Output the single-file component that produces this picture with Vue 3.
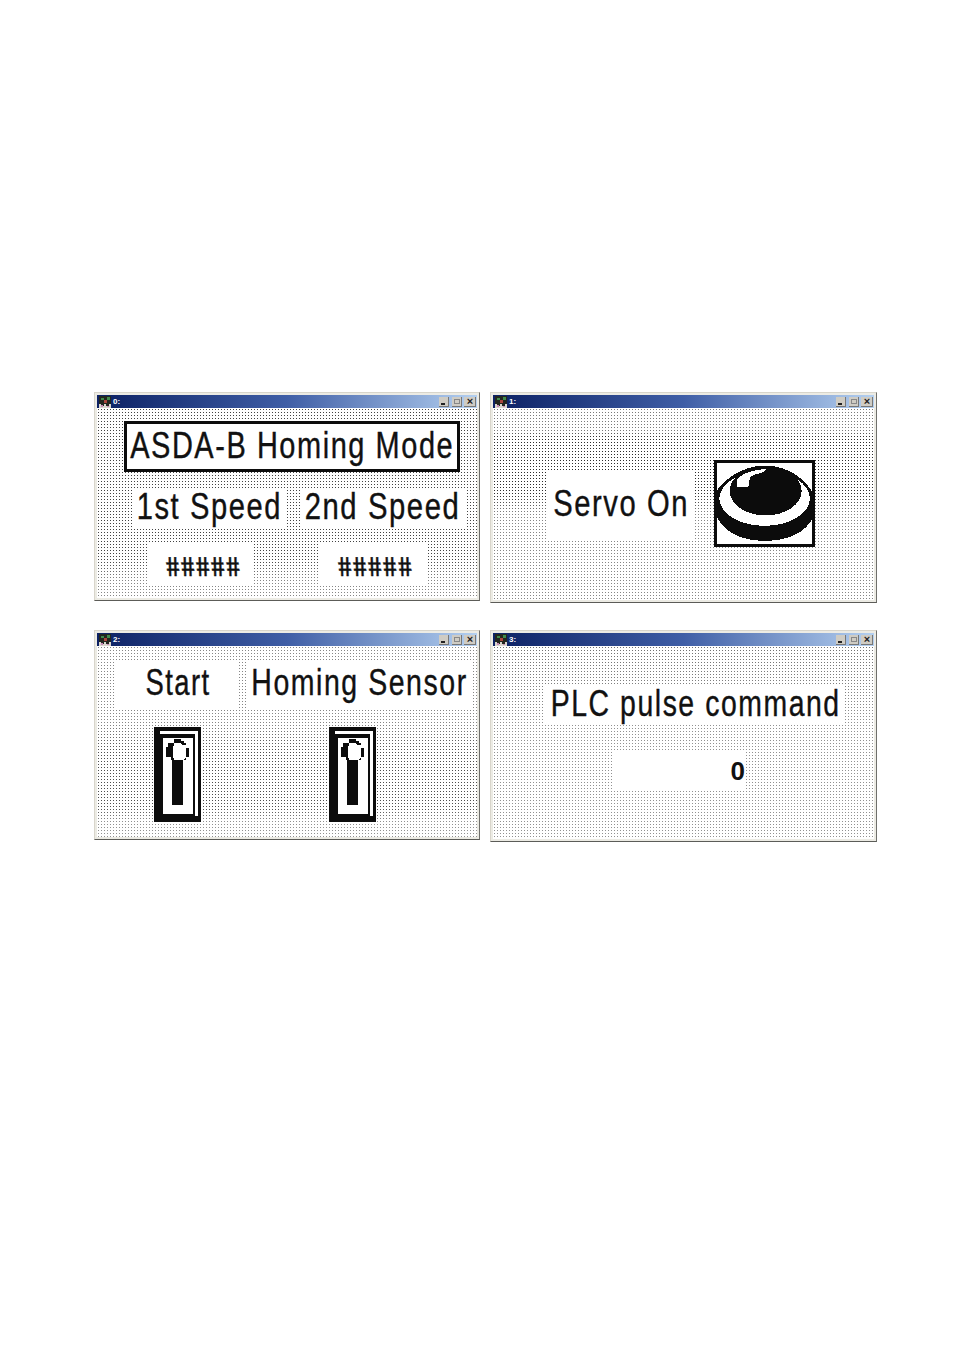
<script setup>
// each HMI screen: widgets sit on a free canvas, coordinates are canvas px
const screens = [
  {
    id: 0,
    height: 209,
    tone: "tone-a",
    items: [
      { text: "ASDA-B Homing Mode", x: 27, y: 13, w: 336, h: 51, fit: 0.782, framed: true },
      { text: "1st Speed", x: 36, y: 80, w: 152, h: 39, fit: 0.786 },
      { text: "2nd Speed", x: 203, y: 80, w: 165, h: 39, fit: 0.79 },
      { text: "#####", x: 50, y: 135, w: 107, h: 43, hash: true },
      { text: "#####", x: 221, y: 135, w: 109, h: 43, hash: true },
    ],
  },
  {
    id: 1,
    height: 211,
    tone: "tone-b",
    button: true,
    items: [{ text: "Servo On", x: 54, y: 62, w: 148, h: 70, fit: 0.788 }],
  },
  {
    id: 2,
    height: 210,
    tone: "tone-d",
    toggles: [57, 232],
    items: [
      { text: "Start", x: 19, y: 14, w: 121, h: 48, fit: 0.74, shift: 2 },
      { text: "Homing Sensor", x: 149, y: 14, w: 226, h: 48, fit: 0.77 },
    ],
  },
  {
    id: 3,
    height: 212,
    tone: "tone-c",
    items: [
      { text: "PLC pulse command", x: 52, y: 38, w: 300, h: 41, fit: 0.768, shift: 1 },
      { text: "0", x: 119, y: 104, w: 133, h: 41, zero: true },
    ],
  },
]

function place(item) {
  return {
    left: item.x + "px",
    top: item.y + "px",
    width: item.w + "px",
    height: item.h + "px",
  }
}

// the HMI font is narrower than Arial, squeeze it to the measured width
function squeeze(item) {
  if (!item.fit) return undefined
  return { transform: `translateX(${item.shift || 0}px) scaleX(${item.fit})` }
}
</script>

<template>
  <main class="page">
    <section
      v-for="s in screens"
      :key="s.id"
      class="window"
      :style="{ height: s.height + 'px' }"
    >
      <header class="titlebar">
        <svg class="app-icon" viewBox="0 0 12 12" shape-rendering="crispEdges">
          <rect width="12" height="12" fill="#d9d6ce" />
          <path d="M0 0h12v8h-2v2H7V8H5v2H2V8H0z" fill="#23261f" />
          <path d="M2 2h3v2H2zM8 1h3v3H8z" fill="#3f8a4b" />
          <path d="M5 4h3v3H5z" fill="#a8443c" />
          <path d="M2 9h2v2H2zM8 10h2v1H8z" fill="#c98ab8" />
        </svg>
        <span class="caption">{{ s.id }}:</span>
        <div class="controls">
          <span class="ctl"><i class="min"></i></span>
          <span class="ctl"><i class="max"></i></span>
          <span class="ctl close">×</span>
        </div>
      </header>

      <div class="canvas" :class="s.tone">
        <div
          v-for="item in s.items"
          :key="item.text + item.x"
          class="label"
          :class="{ framed: item.framed, hash: item.hash, zero: item.zero, squeezed: item.fit }"
          :style="place(item)"
        >
          <span :style="squeeze(item)">{{ item.text }}</span>
        </div>

        <!-- push button -->
        <svg
          v-if="s.button"
          class="push"
          viewBox="42 30 303 260"
          shape-rendering="crispEdges"
        >
          <rect x="42" y="30" width="303" height="260" fill="#fff" />
          <path
            d="M45 130C70 90 120 48 195 46C270 48 320 90 342 135V195C320 250 260 272 195 272C130 272 70 250 45 190Z"
            fill="#0c0c0c"
          />
          <ellipse cx="194" cy="145" rx="136" ry="82" fill="#fff" />
          <ellipse cx="197" cy="122" rx="108" ry="74" fill="#0c0c0c" />
          <path d="M112 110V88Q125 72 150 65Q175 56 200 57L186 68Q160 72 150 82L145 110Z" fill="#fff" />
          <rect x="46.5" y="34.5" width="294" height="251" fill="none" stroke="#0c0c0c" stroke-width="9" />
        </svg>

        <!-- toggle switches -->
        <svg
          v-for="x in s.toggles"
          :key="x"
          class="toggle"
          :style="{ left: x + 'px' }"
          viewBox="42 20 142 285"
          shape-rendering="crispEdges"
        >
          <rect x="42" y="20" width="142" height="285" fill="#0c0c0c" />
          <rect x="60" y="30" width="115" height="10" fill="#fff" />
          <rect x="165" y="30" width="10" height="258" fill="#fff" />
          <rect x="69" y="52" width="91" height="231" fill="#fff" />
          <rect x="95" y="125" width="35" height="130" fill="#0c0c0c" />
          <path d="M102 56h22v6h8v6h8v15h9v27h-9v10h-10v8H95v-8H84v-10H77V78h8V68h17z" fill="#0c0c0c" />
          <path d="M105 66h17l6 6h8l4 8v30l-6 5-4 5h-25l-5-8V78z" fill="#fff" />
          <rect x="84" y="110" width="10" height="10" fill="#fff" />
        </svg>
      </div>
    </section>
  </main>
</template>

<style scoped>
.page {
  display: grid;
  grid-template-columns: 386px 387px;
  column-gap: 10px;
  row-gap: 27px;
  align-content: start;
  align-items: start;
  box-sizing: border-box;
  height: 1350px;
  padding: 392px 0 0 94px;
  background: #fff;
}

.window {
  display: flex;
  flex-direction: column;
  box-sizing: border-box;
  padding: 2px;
  border: 1px solid;
  border-color: #d8d5cb #6f6f6b #5c5c58 #d8d5cb;
  background: #ecebe4;
}

.titlebar {
  display: flex;
  align-items: center;
  flex: none;
  height: 13px;
  padding: 0 1px 0 2px;
  background: linear-gradient(90deg, #0c2164 0%, #3f5ea6 50%, #b4d0f0 100%);
}

.app-icon {
  width: 12px;
  height: 12px;
}

.caption {
  margin-left: 2px;
  font: bold 8px "Liberation Sans", sans-serif;
  color: #fff;
}

.controls {
  display: flex;
  gap: 2px;
  margin-left: auto;
}

.ctl {
  position: relative;
  width: 10px;
  height: 10px;
  background: #cfccc4;
  box-shadow: inset -1px -1px 0 #777;
  font: bold 11px/9px "Liberation Sans", sans-serif;
  color: #222;
  text-align: center;
}

.ctl.close {
  width: 12px;
}

.ctl:nth-child(2) {
  margin-left: 1px;
}

.ctl i {
  position: absolute;
  display: block;
}

.min {
  left: 2px;
  bottom: 2px;
  width: 4px;
  height: 2px;
  background: #222;
}

.max {
  left: 2px;
  top: 2px;
  width: 6px;
  height: 5px;
  box-sizing: border-box;
  border: 1px solid #888;
}

/* dither dots, the first layer washes them out per screen */
.canvas {
  position: relative;
  flex: 1;
  overflow: hidden;
  background-color: #fff;
  background-size: 100% 100%, 3px 3px;
  --dots: radial-gradient(circle at 1.5px 1.5px, #222 0.75px, transparent 1px);
}

.tone-a {
  background-image:
    linear-gradient(180deg, rgba(255, 255, 255, 0.15) 80%, rgba(255, 255, 255, 0.45) 90%),
    var(--dots);
}

.tone-b {
  background-image:
    linear-gradient(
      180deg,
      rgba(255, 255, 255, 0.4) 12%,
      rgba(255, 255, 255, 0.05) 15%,
      rgba(255, 255, 255, 0.05) 45%,
      rgba(255, 255, 255, 0.45) 55%
    ),
    var(--dots);
}

.tone-c {
  background-image:
    linear-gradient(180deg, rgba(255, 255, 255, 0.35), rgba(255, 255, 255, 0.5) 40%),
    var(--dots);
}

.tone-d {
  background-image:
    linear-gradient(
      180deg,
      rgba(255, 255, 255, 0.45) 40%,
      rgba(255, 255, 255, 0.2) 55%,
      rgba(255, 255, 255, 0.2) 85%,
      rgba(255, 255, 255, 0.5) 92%
    ),
    var(--dots);
}

.label {
  position: absolute;
  display: flex;
  align-items: center;
  justify-content: center;
  box-sizing: border-box;
  padding-bottom: 2px;
  background: #fff;
  font: 37px "Liberation Sans", Arial, sans-serif;
  color: #111;
  white-space: nowrap;
}

.label span {
  display: inline-block;
}

.squeezed {
  letter-spacing: 2px;
  -webkit-text-stroke: 0.4px #111;
}

.framed {
  border: 3px solid #0c0c0c;
}

.hash {
  padding: 4px 0 0 6px;
  font: bold 24px "Liberation Sans", Arial, sans-serif;
  letter-spacing: 1.7px;
  -webkit-text-stroke: 0.4px #111;
}

.hash span {
  transform: skewX(12deg) scaleY(1.15);
}

.zero {
  justify-content: flex-end;
  padding: 1px 0 0;
  font: bold 26px "Liberation Sans", Arial, sans-serif;
}

.push {
  position: absolute;
  left: 221px;
  top: 52px;
  width: 101px;
  height: 87px;
}

.toggle {
  position: absolute;
  top: 81px;
  width: 47px;
  height: 95px;
}
</style>

<style>
html,
body {
  background: #fff;
}
</style>
